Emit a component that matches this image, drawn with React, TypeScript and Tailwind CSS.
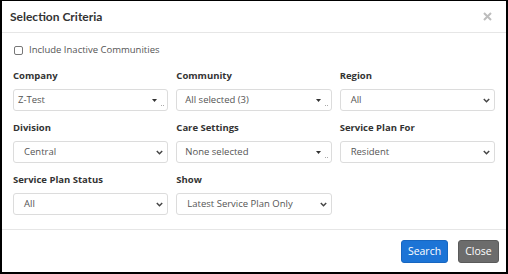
import React from "react";

const Chevron = () => (
  <svg width="7" height="5" viewBox="0 0 7 5" className="shrink-0">
    <path d="M0.8 1 L3.5 3.7 L6.2 1" fill="none" stroke="#444" strokeWidth="1.5" />
  </svg>
);

function NativeSelect({ value }: { value: string }) {
  return (
    <div className="flex items-center justify-between h-[22px] border border-[#dcdcdc] rounded-[3px] pl-[10px] pr-[4px] bg-white">
      <span className="text-[9.5px] text-[#555] leading-none">{value}</span>
      <Chevron />
    </div>
  );
}

function MultiSelect({ value, pl }: { value: string; pl: string }) {
  return (
    <div className={`flex items-center h-[22px] border border-[#dcdcdc] rounded-[3px] bg-white ${pl} pr-[1px]`}>
      <span className="flex-1 text-[9.5px] text-[#555] leading-none">{value}</span>
      <svg width="5" height="3" viewBox="0 0 5 3" className="shrink-0">
        <path d="M0 0 L5 0 L2.5 3 Z" fill="#333" />
      </svg>
      <span className="w-[7px] ml-[2px] self-end mb-[4px] flex gap-[1px] justify-center">
        <span className="w-[1px] h-[1px] bg-[#aaa]" />
        <span className="w-[1px] h-[1px] bg-[#aaa]" />
      </span>
    </div>
  );
}

function Field({ label, children }: { label: string; children: React.ReactNode }) {
  return (
    <div className="flex flex-col">
      <div className="h-[14px] mb-[6px] text-[9.5px] font-bold text-[#333] leading-[14px]">{label}</div>
      {children}
    </div>
  );
}

export default function App() {
  return (
    <div
      className="w-[508px] h-[274px] bg-white border-black border-x-2 border-b-2 border-t flex flex-col"
      style={{ fontFamily: '"Open Sans", sans-serif' }}
    >
      <div className="h-[32px] shrink-0 border-b border-[#e6e6e6] flex items-center justify-between pl-[8px] pr-[14px]">
        <span className="text-[12px] font-bold text-[#333]" style={{ fontFamily: 'Lato, sans-serif' }}>
          Selection Criteria
        </span>
        <svg width="9" height="9" viewBox="0 0 9 9">
          <path d="M1 1 L8 8 M8 1 L1 8" stroke="#bdbdbd" strokeWidth="2" />
        </svg>
      </div>
      <div className="flex-1 px-[11px] pt-[10px] pb-[14px] border-b border-[#e6e6e6]">
        <div className="h-[14px] flex items-center gap-[6px] mb-[12px]">
          <span className="w-[9px] h-[9px] border border-[#777] rounded-[2px] bg-white ml-[1px]" />
          <span className="text-[9.5px] text-[#555] leading-none">Include Inactive Communities</span>
        </div>
        <div className="grid grid-cols-3 gap-x-[8px] gap-y-[10px]">
          <Field label="Company">
            <MultiSelect value="Z-Test" pl="pl-[4px]" />
          </Field>
          <Field label="Community">
            <MultiSelect value="All selected (3)" pl="pl-[8px]" />
          </Field>
          <Field label="Region">
            <NativeSelect value="All" />
          </Field>
          <Field label="Division">
            <NativeSelect value="Central" />
          </Field>
          <Field label="Care Settings">
            <MultiSelect value="None selected" pl="pl-[8px]" />
          </Field>
          <Field label="Service Plan For">
            <NativeSelect value="Resident" />
          </Field>
          <Field label="Service Plan Status">
            <NativeSelect value="All" />
          </Field>
          <Field label="Show">
            <NativeSelect value="Latest Service Plan Only" />
          </Field>
        </div>
      </div>
      <div className="h-[42px] shrink-0 flex items-center justify-end gap-[10px] pr-[7px]">
        <button className="h-[23px] w-[47px] rounded-[3px] bg-[#1c74d6] border border-[#1766c0] text-white text-[10.5px] leading-none">
          Search
        </button>
        <button className="h-[23px] w-[41px] rounded-[3px] bg-[#6c6c6c] border border-[#5a5a5a] text-white text-[10.5px] leading-none">
          Close
        </button>
      </div>
    </div>
  );
}
